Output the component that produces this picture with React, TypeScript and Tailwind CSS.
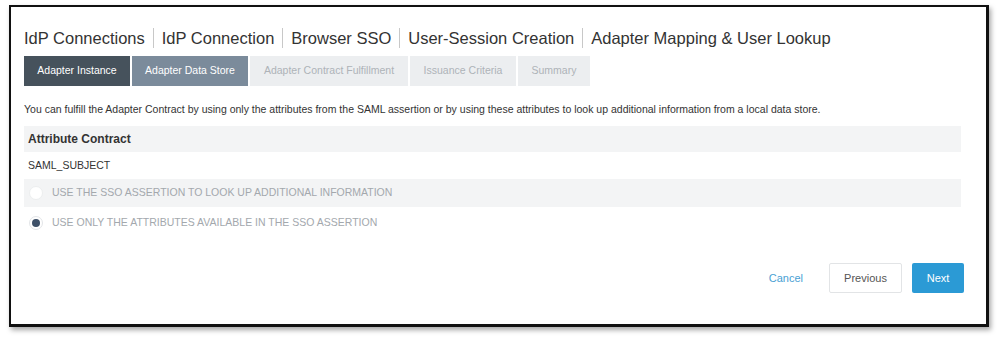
import React from "react";

export default function App() {
  const tabs = [
    { label: "Adapter Instance", cls: "bg-[#46525c] text-white w-[106px]" },
    { label: "Adapter Data Store", cls: "bg-[#7b8b9b] text-white w-[116px]" },
    { label: "Adapter Contract Fulfillment", cls: "bg-[#eceef0] text-[#aeb3b8] w-[158px]" },
    { label: "Issuance Criteria", cls: "bg-[#eceef0] text-[#aeb3b8] w-[106px]" },
    { label: "Summary", cls: "bg-[#eceef0] text-[#aeb3b8] w-[72px]" },
  ];
  const crumbs = ["IdP Connections", "IdP Connection", "Browser SSO", "User-Session Creation", "Adapter Mapping & User Lookup"];
  return (
    <div className="w-[998px] h-[339px] bg-white pt-[5px] pl-[9px] font-['Liberation_Sans',Arial,sans-serif]">
      <div className="w-[980px] h-[322px] border-t-2 border-l-2 border-r-[3px] border-b-[3px] border-[#111] shadow-[2px_3px_5px_rgba(0,0,0,0.35)] bg-white pl-[13px] pr-[22px] pt-[20px]">
        <div className="flex items-center text-[16.5px] text-[#333] leading-[22px] h-[22px]">
          {crumbs.map((c, i) => (
            <React.Fragment key={c}>
              {i > 0 && <span className="mx-[8px] h-[20px] w-px bg-[#c8c8c8]" />}
              <span>{c}</span>
            </React.Fragment>
          ))}
        </div>
        <div className="flex gap-[2px] mt-[7px] h-[30px]">
          {tabs.map((t) => (
            <div key={t.label} className={`flex items-center justify-center text-[10.5px] ${t.cls}`}>
              {t.label}
            </div>
          ))}
        </div>
        <div className="text-[10.5px] text-[#333] mt-[16px] leading-[14px]">
          You can fulfill the Adapter Contract by using only the attributes from the SAML assertion or by using these attributes to look up additional information from a local data store.
        </div>
        <div className="mr-[3px]">
          <div className="mt-[10px] h-[26px] bg-[#f3f4f5] flex items-center pl-[4px] text-[12px] font-bold text-[#333]">
            Attribute Contract
          </div>
          <div className="h-[27px] flex items-center pl-[4px] text-[10.5px] text-[#333]">SAML_SUBJECT</div>
          <div className="h-[28px] bg-[#f3f4f5] flex items-center pl-[5px] text-[10.5px] text-[#a3a8ad]">
            <span className="w-[14px] h-[14px] rounded-full bg-white border border-[#eceeef] mr-[9px]" />
            USE THE SSO ASSERTION TO LOOK UP ADDITIONAL INFORMATION
          </div>
          <div className="h-[31px] flex items-center pl-[5px] text-[10.5px] text-[#a3a8ad]">
            <span className="w-[14px] h-[14px] rounded-full bg-white border border-[#e3e5e8] mr-[9px] flex items-center justify-center">
              <span className="w-[8px] h-[8px] rounded-full bg-[#3e5068]" />
            </span>
            USE ONLY THE ATTRIBUTES AVAILABLE IN THE SSO ASSERTION
          </div>
        </div>
        <div className="flex justify-end items-center mt-[25px]">
          <span className="text-[11px] text-[#4a9fd4] mr-[26px]">Cancel</span>
          <div className="w-[73px] h-[30px] border border-[#e2e4e6] rounded-[2px] flex items-center justify-center text-[11px] text-[#555] mr-[10px]">
            Previous
          </div>
          <div className="w-[52px] h-[30px] rounded-[2px] bg-[#2b9ad5] flex items-center justify-center text-[11px] text-white">
            Next
          </div>
        </div>
      </div>
    </div>
  );
}
